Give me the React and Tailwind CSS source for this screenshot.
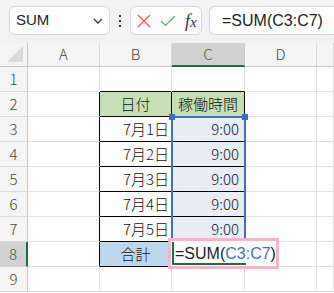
import React from "react";

const jp = { fontFamily: '"Noto Sans CJK JP", "Noto Sans", sans-serif' };

const cols = ["A", "B", "C", "D", ""];
const dates = ["7月1日", "7月2日", "7月3日", "7月4日", "7月5日"];

function Cell({ className = "", children }) {
  return (
    <div className={"flex items-center border-r border-b border-[#e1e1e1] text-[15px] font-light text-[#111] " + className}>
      {children}
    </div>
  );
}

function RowHead({ n, active }) {
  return (
    <div
      className={
        "flex items-center justify-center border-b text-[15px] font-light " +
        (active
          ? "bg-[#d2d2d2] text-[#1e6e42] border-r-2 border-r-[#1e6e42] border-b-[#d4d4d4]"
          : "bg-[#f5f5f5] text-[#444] border-r border-r-[#c8c8c8] border-b-[#d9d9d9]")
      }
    >
      {n}
    </div>
  );
}

export default function App() {
  return (
    <div className="w-[334px] h-[293px] overflow-hidden bg-white relative" style={jp}>
      {/* toolbar */}
      <div className="h-[43px] bg-[#f3f3f3] flex items-start pt-[6px] pl-[9px]">
        <div className="w-[101px] h-[29px] bg-white border border-[#d6d6d6] rounded-md flex items-center justify-between pl-[6px] pr-[6px]">
          <span className="text-[15px] text-[#222]" style={{ fontFamily: '"Liberation Sans", sans-serif' }}>SUM</span>
          <svg width="10" height="6" viewBox="0 0 10 6"><path d="M1 1l4 4 4-4" fill="none" stroke="#333" strokeWidth="1.3" /></svg>
        </div>
        <div className="w-[20px] h-[29px] flex flex-col items-center justify-center gap-[3px]">
          <span className="w-[2px] h-[2px] bg-[#333]"></span>
          <span className="w-[2px] h-[2px] bg-[#333]"></span>
          <span className="w-[2px] h-[2px] bg-[#333]"></span>
        </div>
        <div className="w-[72px] h-[29px] bg-white border border-[#d6d6d6] rounded-md flex items-center pl-[6px] gap-[9px]">
          <svg width="14" height="14" viewBox="0 0 14 14"><path d="M1 1l12 12M13 1L1 13" stroke="#e05a5a" strokeWidth="1.3" fill="none" /></svg>
          <svg width="16" height="12" viewBox="0 0 16 12"><path d="M1 6l4.5 4.5L15 1" stroke="#5aa66a" strokeWidth="1.2" fill="none" /></svg>
          <span className="text-[18px] italic text-[#333] leading-none" style={{ fontFamily: '"Liberation Serif", serif' }}>
            f<span className="text-[15px]">x</span>
          </span>
        </div>
        <div className="ml-[7px] flex-1 h-[29px] bg-white border border-[#d6d6d6] rounded-l-md border-r-0 flex items-center pl-[12px]">
          <span className="text-[16px] text-[#222]" style={{ fontFamily: '"Liberation Sans", sans-serif' }}>=SUM(C3:C7)</span>
        </div>
      </div>

      {/* grid */}
      <div className="grid grid-cols-[28px_72px_72px_73px_72px_1fr] grid-rows-[24px_repeat(9,25px)]">
        {/* header row */}
        <div className="bg-[#f5f5f5] border-r border-b border-[#c8c8c8] relative">
          <div className="absolute right-[4px] bottom-[4px] w-0 h-0 border-l-[16px] border-l-transparent border-b-[16px] border-b-[#d9d9d9]"></div>
        </div>
        {cols.map((c) => (
          <div
            key={c || "E"}
            className={
              "flex items-center justify-center text-[15px] font-light border-r " +
              (c === "C"
                ? "bg-[#d2d2d2] text-[#1e6e42] border-b-2 border-b-[#1e6e42] border-r-[#c8c8c8]"
                : "bg-[#f5f5f5] text-[#444] border-b border-b-[#c8c8c8] border-r-[#d9d9d9]")
            }
          >
            {c}
          </div>
        ))}

        {/* row 1 */}
        <RowHead n="1" />
        <Cell />
        <Cell className="border-b-black" />
        <Cell className="border-b-black" />
        <Cell />
        <Cell />

        {/* row 2 */}
        <RowHead n="2" />
        <Cell className="border-r-black" />
        <Cell className="bg-[#c6e0b4] justify-center border-r-black border-b-black">日付</Cell>
        <Cell className="bg-[#c6e0b4] justify-center border-r-black border-b-black">稼働時間</Cell>
        <Cell />
        <Cell />

        {dates.map((d, i) => (
          <React.Fragment key={d}>
            <RowHead n={String(i + 3)} />
            <Cell className="border-r-black" />
            <Cell className="justify-end pr-[2px] border-r-black border-b-black">{d}</Cell>
            <Cell className="bg-[#e8eef8] justify-end pr-[5px] border-r-black border-b-black">9:00</Cell>
            <Cell />
            <Cell />
          </React.Fragment>
        ))}

        {/* row 8 */}
        <RowHead n="8" active />
        <Cell className="border-r-black" />
        <Cell className="bg-[#bdd7ee] justify-center border-r-black border-b-black">合計</Cell>
        <Cell className="border-r-black border-b-black" />
        <Cell />
        <Cell />

        {/* row 9 */}
        <RowHead n="9" />
        <Cell />
        <Cell />
        <Cell />
        <Cell />
        <Cell />
      </div>

      {/* range selection C3:C7 */}
      <div className="absolute left-[171px] top-[116px] w-[75px] h-[127px] border-2 border-[#3f6fc0] pointer-events-none">
        <div className="absolute -left-[4px] -top-[4px] w-[6px] h-[6px] bg-[#3f6fc0]"></div>
        <div className="absolute -right-[4px] -top-[4px] w-[6px] h-[6px] bg-[#3f6fc0]"></div>
        <div className="absolute -left-[4px] -bottom-[4px] w-[6px] h-[6px] bg-[#3f6fc0]"></div>
        <div className="absolute -right-[4px] -bottom-[4px] w-[6px] h-[6px] bg-[#3f6fc0]"></div>
      </div>

      {/* editing cell C8 */}
      <div className="absolute left-[168px] top-[238px] w-[111px] h-[31px] border-[3px] border-[#f2b6cc] bg-white flex items-center">
        <div className="absolute left-[1px] top-[1px] bottom-[1px] w-[74px] border-l-2 border-b-2 border-[#1e6e42]"></div>
        <span className="ml-[4px] text-[16px] text-[#222] relative" style={{ fontFamily: '"Liberation Sans", sans-serif' }}>
          =SUM(<span className="text-[#3f6fc0]">C3:C7</span>)
        </span>
        <span className="ml-[2px] w-[1px] h-[21px] bg-black"></span>
      </div>
    </div>
  );
}
